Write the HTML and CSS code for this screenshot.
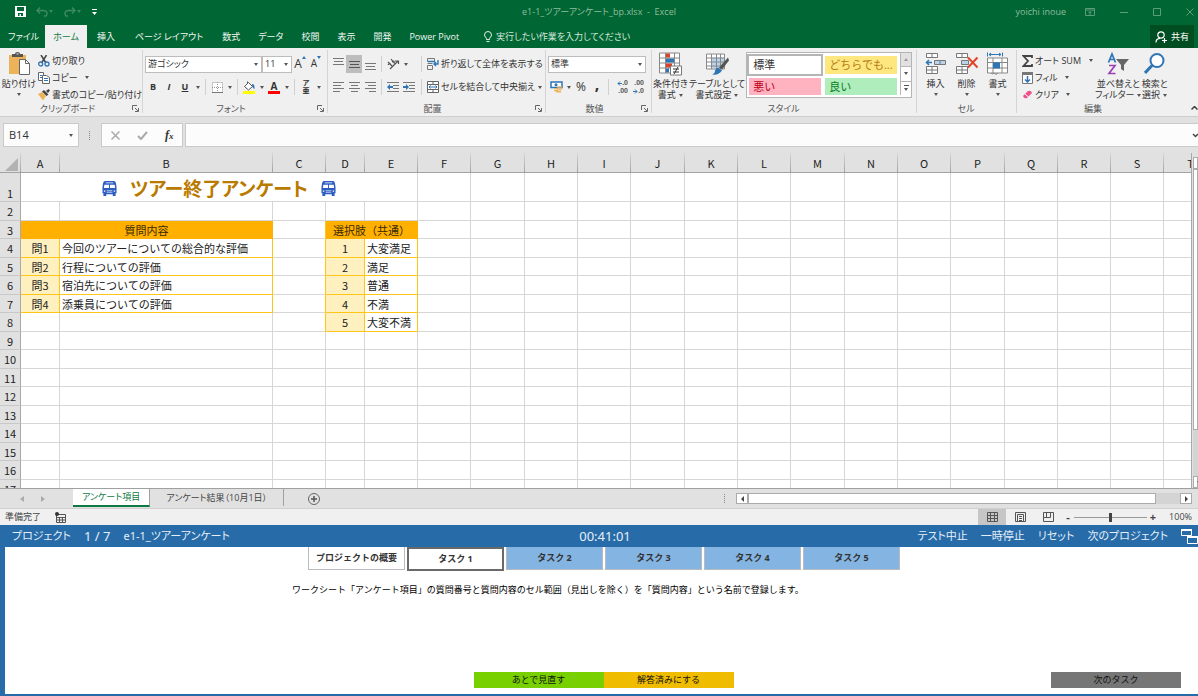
FILE: index.html
```html
<!DOCTYPE html>
<html lang="ja">
<head>
<meta charset="utf-8">
<title>e1-1_ツアーアンケート_bp.xlsx - Excel</title>
<link rel="stylesheet" href="styles.css">
</head>
<body>
<svg class="defs" aria-hidden="true">
  <symbol id="bus" viewBox="0 0 16 16"><path fill="#2c5cc0" d="M3 0h10q1.500 0 2 3l.5 4v6h-1v3h-3v-2h-7v2h-3v-3h-1V7L1 3Q1.500 0 3 0z"/><path fill="#fff" d="M4 1.500h8v1H4zM2.500 4h5v3.500H2zM8.500 4h5l.5 3.500H8.500zM5 10h6v1H5zM5 12h6v.5H5zM2 10h1.500v1.500H2zM12.500 10H14v1.500h-1.500z"/></symbol>
  <symbol id="launch" viewBox="0 0 7 7"><path fill="none" stroke="#666" d="M.5 5V.5H5M3 3l3 3M6.500 3v3.500H3"/></symbol>
</svg>

<header class="titlebar">
  <div class="quick">
    <button aria-label="保存"><svg width="11" height="11" viewBox="0 0 11 11"><path fill="#fff" d="M0 0h11v11H0zM2 1v4h7V1zM3 7v3h1.500V8H6v2h2V7z" fill-rule="evenodd"/></svg></button>
    <button aria-label="元に戻す" class="dim"><svg width="12" height="10" viewBox="0 0 12 10"><path fill="none" stroke="currentColor" stroke-width="1.500" d="M4 .5L1 3.500l3 3M1 3.500h6q4 0 4 3T8 9"/></svg><i class="arw"></i></button>
    <button aria-label="やり直し" class="dim"><svg width="12" height="10" viewBox="0 0 12 10"><path fill="none" stroke="currentColor" stroke-width="1.500" d="M8 .5l3 3-3 3M11 3.500H5Q1 3.500 1 6.500T4 9"/></svg><i class="arw"></i></button>
    <button aria-label="クイックアクセスのカスタマイズ"><svg width="5" height="6" viewBox="0 0 5 6"><path fill="#fff" d="M0 0h5v1H0zM0 3h5L2.500 6z"/></svg></button>
  </div>
  <h1 class="doc">e1-1_ツアーアンケート_bp.xlsx&nbsp; -&nbsp; Excel</h1>
  <div class="winctl">
    <span class="user">yoichi inoue</span>
    <button aria-label="リボンの表示オプション"><svg width="10" height="8" viewBox="0 0 10 8"><path fill="none" stroke="currentColor" d="M.5.5h9v7h-9zM.5 2h9M5 7V3.500M3.500 5L5 3.500 6.500 5"/></svg></button>
    <button aria-label="最小化"><svg width="8" height="8"><path stroke="currentColor" d="M0 4.500h8"/></svg></button>
    <button aria-label="最大化"><svg width="8" height="8"><path fill="none" stroke="currentColor" d="M.5.5h7v7h-7z"/></svg></button>
    <button aria-label="閉じる"><svg width="8" height="8"><path stroke="currentColor" d="M.5.5l7 7M7.500.5l-7 7"/></svg></button>
  </div>
</header>

<nav class="tabs">
  <button>ファイル</button>
  <button class="on">ホーム</button>
  <button>挿入</button>
  <button>ページ レイアウト</button>
  <button>数式</button>
  <button>データ</button>
  <button>校閲</button>
  <button>表示</button>
  <button>開発</button>
  <button>Power Pivot</button>
  <button class="tell"><svg width="8" height="12" viewBox="0 0 8 12"><path fill="none" stroke="#e5f0e8" d="M2.500 8.500Q2.500 7 1.500 6 .5 5 .5 4q0-3.500 3.500-3.500T7.500 4q0 1-1 2t-1 2.500zM2.500 10.500h3"/></svg>実行したい作業を入力してください</button>
  <button class="share"><svg width="12" height="12" viewBox="0 0 12 12"><circle cx="6" cy="4" r="3.200" fill="none" stroke="#fff" stroke-width="1.200"/><path fill="none" stroke="#fff" stroke-width="1.200" d="M1 11.500q0-4 4-4.200M9.500 7v5M7 9.500h5"/></svg>共有</button>
</nav>

<section class="ribbon">
  <div class="group g-clip">
    <div class="body">
      <button class="big"><svg width="22" height="24" viewBox="0 0 22 24"><path fill="#edb35a" d="M1 3h17v19H1z"/><path fill="#555" d="M4 5V2h3q0-2 2.500-2T12 2h3v3z"/><path fill="#eee" d="M8.500 1.500h2v1h-2z"/><path fill="#fff" stroke="#666" d="M11.500 7.500h6l4 4v11h-10z"/><path fill="none" stroke="#666" d="M17.500 7.500v4h4"/></svg><span>貼り付け</span><i class="arw"></i></button>
      <div class="list">
        <button><svg width="12" height="12" viewBox="0 0 12 12"><path stroke="#444" stroke-width="1.500" d="M3 0l5 8M8.500 0l-5 8"/><g fill="none" stroke="#2e75b6" stroke-width="1.300"><circle cx="2.700" cy="9" r="2"/><circle cx="9" cy="9" r="2"/></g></svg>切り取り</button>
        <button><svg width="12" height="12" viewBox="0 0 12 12"><path fill="#fff" stroke="#666" d="M.5.5h5v8h-5z"/><path fill="#fff" stroke="#666" d="M4.500 3.500h4l3 2v6h-7z"/><path stroke="#2e75b6" d="M2 3.500h2M2 5.500h2M6 6.500h4M6 8.500h4"/></svg>コピー <i class="arw"></i></button>
        <button><svg width="12" height="12" viewBox="0 0 12 12"><path fill="#edb35a" d="M0 5l4-2 4 4-3 4.500z"/><path fill="#444" d="M4 2.500l2-1.500 4.500 4.500L8.500 7zM8 2l2.500-2L12 1.500 10 4z"/></svg>書式のコピー/貼り付け</button>
      </div>
    </div>
    <div class="foot"><span>クリップボード</span><svg width="7" height="7"><use href="#launch"/></svg></div>
  </div>

  <div class="group g-font">
    <div class="body rows">
      <div class="row">
        <span class="sel fontname"><select aria-label="フォント"><option>游ゴシック</option></select></span>
        <span class="sel fontsize"><select aria-label="フォント サイズ"><option>11</option></select></span>
        <button class="tb aa" aria-label="フォント サイズの拡大">A<svg width="4" height="3"><path fill="#2e75b6" d="M0 3h4L2 0z"/></svg></button>
        <button class="tb aa small" aria-label="フォント サイズの縮小">A<svg width="4" height="3"><path fill="#2e75b6" d="M0 0h4L2 3z"/></svg></button>
      </div>
      <div class="row">
        <button class="tb"><b>B</b></button><button class="tb it"><b>I</b></button><button class="tb un"><b>U</b></button><i class="arw"></i>
        <i class="sep"></i>
        <button class="tb" aria-label="罫線"><svg width="11" height="11"><path fill="#fff" stroke="#999" stroke-dasharray="1 1" d="M.5.5h10v10H.5zM5.500 0v11M0 5.500h11"/><path stroke="#777" d="M0 10.500h11"/></svg></button><i class="arw"></i>
        <i class="sep"></i>
        <button class="tb" aria-label="塗りつぶしの色"><svg width="13" height="13" viewBox="0 0 13 13"><path fill="#fff" stroke="#555" d="M1.500 5.500l4-4 4 4-4 3.500zM4.500 3V.5"/><path fill="#2e75b6" d="M9 3q3 0 2.500 5Q9 7 9 3z"/><path fill="#ff0" d="M0 10h12v3H0z"/></svg></button><i class="arw"></i>
        <button class="tb fc" aria-label="フォントの色"><b>A</b></button><i class="arw"></i>
        <i class="sep"></i>
        <button class="tb ruby" aria-label="ふりがな"><span>ア</span><span>亜</span></button><i class="arw"></i>
      </div>
    </div>
    <div class="foot"><span>フォント</span><svg width="7" height="7"><use href="#launch"/></svg></div>
  </div>

  <div class="group g-align">
    <div class="body rows">
      <div class="row">
        <button class="tb" aria-label="上揃え"><svg width="11" height="12"><path stroke="#777" d="M0 .5h11M1 3.500h9M0 6.500h11"/></svg></button>
        <button class="tb on" aria-label="上下中央揃え"><svg width="11" height="12"><path stroke="#555" d="M0 3.500h11M1 6.500h9M0 9.500h11"/></svg></button>
        <button class="tb" aria-label="下揃え"><svg width="11" height="12"><path stroke="#777" d="M0 5.500h11M1 8.500h9M0 11.500h11"/></svg></button>
        <i class="sep"></i>
        <span class="pair"><button class="tb" aria-label="方向"><svg width="13" height="12" viewBox="0 0 13 12"><path fill="none" stroke="#555" stroke-width="1.200" d="M3 11l8-8M8 3h3.500v3M1 4l4 4M1 7q2-3 2.500-.5M4 1l4 5M5 4q3-2 2 1"/></svg></button><i class="arw"></i></span>
        <i class="sep"></i>
        <button class="lbl"><svg width="12" height="12" viewBox="0 0 12 12"><path fill="none" stroke="#777" d="M.5.5h7v3h-7zM.5 7.500h5v4h-5zM.5 5.500h5"/><path fill="none" stroke="#2e75b6" stroke-width="1.400" d="M1 3.500h7M11 2v4H7M9 4L7 6l2 2"/></svg>折り返して全体を表示する</button>
      </div>
      <div class="row">
        <button class="tb" aria-label="左揃え"><svg width="11" height="10"><path stroke="#777" d="M0 .5h11M0 3.500h8M0 6.500h11M0 9.500h7"/></svg></button>
        <button class="tb" aria-label="中央揃え"><svg width="11" height="10"><path stroke="#777" d="M0 .5h11M2 3.500h7M0 6.500h11M2 9.500h7"/></svg></button>
        <button class="tb" aria-label="右揃え"><svg width="11" height="10"><path stroke="#777" d="M0 .5h11M3 3.500h8M0 6.500h11M4 9.500h7"/></svg></button>
        <i class="sep"></i>
        <span class="pair"><button class="tb" aria-label="インデントを減らす"><svg width="12" height="10"><path stroke="#777" d="M0 .5h12M6 3.500h6M6 6.500h6M0 9.500h12"/><path fill="#2e75b6" d="M0 5l3-3v2h3v2H3v2z"/></svg></button><button class="tb" aria-label="インデントを増やす"><svg width="12" height="10"><path stroke="#777" d="M0 .5h12M6 3.500h6M6 6.500h6M0 9.500h12"/><path fill="#2e75b6" d="M6 5L3 2v2H0v2h3v2z"/></svg></button></span>
        <i class="sep"></i>
        <button class="lbl"><svg width="12" height="12" viewBox="0 0 12 12"><path fill="#fff" stroke="#666" d="M.5.5h11v11H.5zM.5 3.500h11M.5 8.500h11M6 .5v3M6 8.500v3"/><path stroke="#2e75b6" d="M2 6h8M3.500 4.500L2 6l1.500 1.500M8.500 4.500L10 6 8.500 7.500" fill="none"/></svg>セルを結合して中央揃え</button><i class="arw end"></i>
      </div>
    </div>
    <div class="foot"><span>配置</span><svg width="7" height="7"><use href="#launch"/></svg></div>
  </div>

  <div class="group g-num">
    <div class="body rows">
      <div class="row"><span class="sel numfmt"><select aria-label="表示形式"><option>標準</option></select></span></div>
      <div class="row">
        <button class="tb" aria-label="通貨表示形式"><svg width="13" height="12" viewBox="0 0 13 12"><path fill="#fff" stroke="#2e75b6" stroke-width="1.500" d="M1 1h11v5.500H1z"/><circle cx="6" cy="3.700" r="1.500" fill="#2e75b6"/><path fill="#edb35a" d="M4 7h4v1.200H4zM4 9h4v1.200H4zM7 5.500h5v1.200H7zM7 7.500h5v1.200H7zM6 9.500h5v2H6z"/></svg></button><i class="arw"></i>
        <button class="tb pct">%</button><button class="tb pct comma"><b>,</b></button>
        <i class="sep"></i>
        <button class="tb dec" aria-label="小数点以下の表示桁数を増やす"><span><svg width="5" height="5"><path fill="none" stroke="#2e75b6" d="M5 2.500H1M3 .5l-2 2 2 2"/></svg>.0</span><span>.00</span></button>
        <button class="tb dec" aria-label="小数点以下の表示桁数を減らす"><span>.00</span><span><svg width="5" height="5"><path fill="none" stroke="#2e75b6" d="M0 2.500h4M2 .5l2 2-2 2"/></svg>.0</span></button>
      </div>
    </div>
    <div class="foot"><span>数値</span><svg width="7" height="7"><use href="#launch"/></svg></div>
  </div>

  <div class="group g-style">
    <div class="body">
      <button class="big"><svg width="23" height="23" viewBox="0 0 23 23"><path fill="#fff" stroke="#888" d="M.5.5h20v20H.5zM.5 5.500h20M.5 10.500h20M.5 15.500h20M6.500.5v20M15.500.5v20"/><path fill="#d8432a" d="M7 1h4v4H7zM7 11h6v4H7z"/><path fill="#2e75b6" d="M7 6h8v4H7zM7 16h3v4H7z"/><path fill="#fff" stroke="#777" d="M11.500 13.500h11v9h-11z"/><path stroke="#333" d="M14 16.500h6M14 19.500h6M19 14.500l-4 7"/></svg><span>条件付き<br>書式 <i class="arw"></i></span></button>
      <button class="big"><svg width="23" height="23" viewBox="0 0 23 23"><path fill="#fff" d="M1 1h18v15H1z"/><path fill="#b8d3ea" d="M6 5h13v11H6z"/><path fill="none" stroke="#888" d="M.5 1.500h18v15H.5zM.5 5.500h18M.5 9.500h18M.5 13.500h18M5.500 1.500v15M10.500 1.500v15M14.500 1.500v15"/><path fill="#555" d="M22 5l1 3-7 9-3-2z"/><path fill="#2e75b6" d="M12 15l4 3q-3 5-10 4 3-1 3-4 1-2 3-3z"/></svg><span>テーブルとして<br>書式設定 <i class="arw"></i></span></button>
      <div class="gallery">
        <button class="st normal">標準</button><button class="st neutral">どちらでも...</button>
        <button class="st bad">悪い</button><button class="st good">良い</button>
        <div class="gscroll"><button class="off" aria-label="上へ"><i class="arw up"></i></button><button aria-label="下へ"><i class="arw"></i></button><button class="more" aria-label="その他"><i class="arw"></i></button></div>
      </div>
    </div>
    <div class="foot"><span>スタイル</span></div>
  </div>

  <div class="group g-cell">
    <div class="body">
      <button class="big"><svg width="21" height="22" viewBox="0 0 21 22"><path fill="#fff" stroke="#777" d="M1.500.5h11v4h-11zM7 .5v4M1.500 13.500h11v7h-11zM1.500 17h11M7 13.500v7"/><path fill="#b8d3ea" stroke="#777" d="M9.500 7.500h11v4h-11zM15 7.500v4"/><path fill="none" stroke="#2e75b6" stroke-width="1.500" d="M1 9.500h6M4 7L1.500 9.500 4 12"/></svg><span>挿入</span><i class="arw"></i></button>
      <button class="big"><svg width="22" height="22" viewBox="0 0 22 22"><path fill="#fff" stroke="#777" d="M.5.5h11v4H.5zM6 .5v4M.5 13.500h11v7H.5zM.5 17h11M6 13.500v7"/><path fill="#b8d3ea" stroke="#777" d="M5.500 7.500h7v4h-7z"/><path stroke="#e0442a" stroke-width="2" d="M12 4.500l9.500 10M21.500 4.500l-9.500 10"/></svg><span>削除</span><i class="arw"></i></button>
      <button class="big"><svg width="21" height="23" viewBox="0 0 21 23"><path fill="#fff" stroke="#888" d="M.5 5.500h20v15H.5zM.5 10h20M.5 15.500h20M6 5.500v15M15 5.500v15"/><path fill="#2e75b6" d="M6 10h7v6H6z"/><path fill="none" stroke="#2e75b6" d="M.5 0v4M15.500 0v4M2 2h12M4 .5L2 2l2 1.500M12 .5L14 2l-2 1.500"/><path fill="none" stroke="#888" d="M4 20.500q1 2 3 0 2 3 4 0"/></svg><span>書式</span><i class="arw"></i></button>
    </div>
    <div class="foot"><span>セル</span></div>
  </div>

  <div class="group g-edit">
    <div class="body">
      <div class="list">
        <button><svg width="11" height="12" viewBox="0 0 11 12"><path fill="none" stroke="#444" stroke-width="1.800" d="M10 3V1H1.500L6 6l-4.500 5H10V9"/></svg>オート SUM <i class="arw far"></i></button>
        <button><svg width="11" height="12" viewBox="0 0 11 12"><path fill="#fff" stroke="#777" d="M.5.5h10v11H.5z"/><path fill="#777" d="M0 0h11v3H0z"/><path fill="none" stroke="#2e75b6" stroke-width="1.500" d="M5.500 4v6M3 7.500L5.500 10 8 7.500"/></svg>フィル <i class="arw"></i></button>
        <button><svg width="11" height="12" viewBox="0 0 11 12"><path fill="#f0508a" d="M1 7l5-5q3-1 4 2L5 9q-3 1-4-2z"/><path stroke="#fff" d="M3 5l3.500 3"/></svg>クリア <i class="arw"></i></button>
      </div>
      <button class="big"><svg width="23" height="22" viewBox="0 0 23 22"><g fill="none" stroke-width="1.700"><path stroke="#2e75b6" d="M1.500 9.500L5 1l3.500 8.500M2.500 6.500h5"/><path stroke="#9b3fb5" d="M2 12.500h6l-6 8h6.500"/></g><path fill="#666" d="M9 6h13l-5 6v6l-3-2v-4z"/></svg><span>並べ替えと<br>フィルター <i class="arw"></i></span></button>
      <button class="big"><svg width="21" height="22" viewBox="0 0 21 22"><circle cx="13" cy="7.500" r="6.500" fill="#fff" stroke="#2e75b6" stroke-width="2"/><path stroke="#2e75b6" stroke-width="3" d="M8 12.500L1 20"/></svg><span>検索と<br>選択 <i class="arw"></i></span></button>
    </div>
    <div class="foot"><span>編集</span></div>
  </div>
  <button class="collapse" aria-label="リボンを折りたたむ"><svg width="7" height="4"><path fill="none" stroke="#444" stroke-width="1.500" d="M.5 3.500l3-3 3 3"/></svg></button>
</section>

<section class="formula">
  <div class="namebox"><input aria-label="名前ボックス" value="B14"><i class="arw"></i></div>
  <i class="dots"></i>
  <div class="fx">
    <button aria-label="キャンセル"><svg width="9" height="9"><path stroke="#aaa" stroke-width="1.500" d="M.5.5l8 8M8.500.5l-8 8"/></svg></button>
    <button aria-label="入力"><svg width="11" height="9"><path fill="none" stroke="#aaa" stroke-width="2" d="M1 5l3 3 6-7"/></svg></button>
    <button class="fn" aria-label="関数の挿入"><i>f<small>x</small></i></button>
  </div>
  <div class="bar"><input aria-label="数式バー"><svg width="6" height="5"><path fill="none" stroke="#444" stroke-width="1.500" d="M1 1l2.500 2.500L6 1"/></svg></div>
</section>

<main class="sheet">
  <div class="grid">
    <table>
      <colgroup><col class="c-head"><col class="c-a"><col class="c-b"><col class="c-n"><col class="c-d"><col class="c-n"><col class="c-n"><col class="c-w"><col class="c-n"><col class="c-n"><col class="c-w"><col class="c-n"><col class="c-n"><col class="c-w"><col class="c-n"><col class="c-n"><col class="c-w"><col class="c-n"><col class="c-n"><col class="c-n"><col class="c-w"></colgroup>
      <thead><tr><th class="corner"><svg width="13" height="13"><path fill="#b2b2b2" d="M13 0v13H0z"/></svg></th><th>A</th><th>B</th><th>C</th><th>D</th><th>E</th><th>F</th><th>G</th><th>H</th><th>I</th><th>J</th><th>K</th><th>L</th><th>M</th><th>N</th><th>O</th><th>P</th><th>Q</th><th>R</th><th>S</th><th>T</th></tr></thead>
      <tbody>
      <tr class="r1"><th>1</th><td colspan="5"><div class="heading"><svg width="15" height="15"><use href="#bus"/></svg><span>ツアー終了アンケート</span><svg width="15" height="15"><use href="#bus"/></svg></div></td><td><td><td><td><td><td><td><td><td><td><td><td><td><td><td></tr>
      <tr><th>2</th><td><td><td><td><td><td><td><td><td><td><td><td><td><td><td><td><td><td><td><td></tr>
      <tr><th>3</th><td colspan="2" class="hd">質問内容</td><td class="pre"><td colspan="2" class="hd">選択肢（共通）</td><td><td><td><td><td><td><td><td><td><td><td><td><td><td><td></tr>
      <tr><th>4</th><td class="k">問1</td><td class="v">今回のツアーについての総合的な評価</td><td class="pre"><td class="k">1</td><td class="v">大変満足</td><td><td><td><td><td><td><td><td><td><td><td><td><td><td><td></tr>
      <tr><th>5</th><td class="k">問2</td><td class="v">行程についての評価</td><td class="pre"><td class="k">2</td><td class="v">満足</td><td><td><td><td><td><td><td><td><td><td><td><td><td><td><td></tr>
      <tr><th>6</th><td class="k">問3</td><td class="v">宿泊先についての評価</td><td class="pre"><td class="k">3</td><td class="v">普通</td><td><td><td><td><td><td><td><td><td><td><td><td><td><td><td></tr>
      <tr><th>7</th><td class="k">問4</td><td class="v">添乗員についての評価</td><td class="pre"><td class="k">4</td><td class="v">不満</td><td><td><td><td><td><td><td><td><td><td><td><td><td><td><td></tr>
      <tr><th>8</th><td><td><td class="pre"><td class="k">5</td><td class="v">大変不満</td><td><td><td><td><td><td><td><td><td><td><td><td><td><td><td></tr>
      <tr><th>9</th><td><td><td><td><td><td><td><td><td><td><td><td><td><td><td><td><td><td><td><td></tr>
      <tr><th>10</th><td><td><td><td><td><td><td><td><td><td><td><td><td><td><td><td><td><td><td><td></tr>
      <tr><th>11</th><td><td><td><td><td><td><td><td><td><td><td><td><td><td><td><td><td><td><td><td></tr>
      <tr><th>12</th><td><td><td><td><td><td><td><td><td><td><td><td><td><td><td><td><td><td><td><td></tr>
      <tr><th>13</th><td><td><td><td><td><td><td><td><td><td><td><td><td><td><td><td><td><td><td><td></tr>
      <tr><th>14</th><td><td><td><td><td><td><td><td><td><td><td><td><td><td><td><td><td><td><td><td></tr>
      <tr><th>15</th><td><td><td><td><td><td><td><td><td><td><td><td><td><td><td><td><td><td><td><td></tr>
      <tr><th>16</th><td><td><td><td><td><td><td><td><td><td><td><td><td><td><td><td><td><td><td><td></tr>
      <tr><th>17</th><td><td><td><td><td><td><td><td><td><td><td><td><td><td><td><td><td><td><td><td></tr>
      </tbody>
    </table>
  </div>
  <div class="vscroll"><button aria-label="上へスクロール"><i class="arw up"></i></button><div class="vthumb"></div><div class="vtrack"></div><button aria-label="下へスクロール"><i class="arw"></i></button></div>
</main>

<section class="sheettabs">
  <div class="nav"><button aria-label="前のシート"><svg width="4" height="6"><path fill="#aaa" d="M4 0v6L0 3z"/></svg></button><button aria-label="次のシート"><svg width="4" height="6"><path fill="#aaa" d="M0 0v6l4-3z"/></svg></button></div>
  <button class="stab on">アンケート項目</button>
  <button class="stab wide">アンケート結果（10月1日）</button>
  <button class="add" aria-label="新しいシート"><svg width="12" height="12"><circle cx="6" cy="6" r="5.500" fill="none" stroke="#666"/><path stroke="#555" stroke-width="1.500" d="M6 3v6M3 6h6"/></svg></button>
  <div class="hwrap">
    <i class="dots"></i>
    <button class="hb" aria-label="左へスクロール"><svg width="3" height="6"><path fill="#444" d="M3 0v6L0 3z"/></svg></button>
    <div class="hthumb"></div><div class="htrack"></div>
    <button class="hb" aria-label="右へスクロール"><svg width="3" height="6"><path fill="#444" d="M0 0v6l3-3z"/></svg></button>
  </div>
</section>

<footer class="status">
  <span>準備完了</span>
  <svg width="11" height="11"><path fill="none" stroke="#555" d="M1.500 2.500h9v8h-9zM1.500 5.500h9M4.500 5v5M7.500 5v5M2 8h8"/><circle cx="2" cy="2" r="2" fill="#333"/></svg>
  <div class="views">
    <button class="on" aria-label="標準"><svg width="11" height="10"><path fill="none" stroke="#555" d="M.5.500h10v9H.5zM.5 3.500h10M.5 6.500h10M3.500.500v9M7.500.500v9"/></svg></button>
    <button aria-label="ページ レイアウト"><svg width="11" height="10"><path fill="none" stroke="#555" d="M.5.500h10v9H.5zM2.500 2.500h6v7M2.500 2.500v7M4 4.500h3M4 6.500h3M4 8.500h3"/></svg></button>
    <button aria-label="改ページ プレビュー"><svg width="11" height="10"><path fill="none" stroke="#555" d="M.5.500h10v9H.5zM3.500.500v5M7.500.500v5M.5 5.500h7"/></svg></button>
  </div>
  <button class="zb">-</button><input type="range" aria-label="ズーム" min="0" max="100" value="50"><button class="zb">+</button>
  <span class="pc">100%</span>
</footer>

<section class="exam">
  <header class="exbar">
    <div class="proj"><span>プロジェクト</span><span class="num">1 / 7</span><span>e1-1_ツアーアンケート</span></div>
    <time class="num">00:41:01</time>
    <div class="acts"><button>テスト中止</button><button>一時停止</button><button>リセット</button><button>次のプロジェクト</button><button class="lay" aria-label="ウィンドウの配置"><svg width="17" height="16"><path fill="none" stroke="#fff" d="M.5 1.500h10v6H.5z"/><path stroke="#fff" stroke-width="2" d="M0 2h11"/><path fill="#276ca9" stroke="#fff" d="M6.500 8.500h10v7h-10z"/><path stroke="#fff" stroke-width="2" d="M6 9h11"/></svg></button></div>
  </header>
  <div class="expane">
    <nav class="tasks"><button class="over">プロジェクトの概要</button><button class="cur">タスク 1</button><button>タスク 2</button><button>タスク 3</button><button>タスク 4</button><button>タスク 5</button></nav>
    <p>ワークシート「アンケート項目」の質問番号と質問内容のセル範囲（見出しを除く）を「質問内容」という名前で登録します。</p>
    <div class="answers"><button class="later">あとで見直す</button><button class="done">解答済みにする</button><button class="next">次のタスク</button></div>
  </div>
</section>
</body>
</html>
```
FILE: styles.css
```css
* { box-sizing: border-box; }
body {
  margin: 0;
  height: 100vh;
  display: flex;
  flex-direction: column;
  overflow: hidden;
  background: #e1e1e1;
  color: #333;
  font: 9px/12px "Open Sans", "Noto Sans CJK JP", sans-serif;
  font-feature-settings: "palt";
}
button, input, select {
  font: inherit;
  font-feature-settings: inherit;
  color: inherit;
  background: none;
  border: 0;
  padding: 0;
  margin: 0;
  border-radius: 0;
  outline: 0;
  white-space: nowrap;
}
svg { flex: none; display: block; }
.defs { position: absolute; width: 0; height: 0; }

/* small drop-down triangle */
.arw { display: inline-flex; flex: none; width: 9px; justify-content: center; align-items: center; vertical-align: middle; }
.arw::before { content: ""; border: 2px solid transparent; border-top: 3px solid #555; border-bottom: 0; }
.arw.up::before { border-top: 0; border-bottom: 3px solid #999; }

/* title bar */
.titlebar { flex: none; height: 25px; padding-bottom: 2px; background: #006633; color: #8fbd9f; display: grid; grid-template-columns: 1fr auto 1fr; align-items: center; }
.quick { display: flex; align-items: center; gap: 10px; padding-left: 15px; }
.quick button { display: flex; align-items: center; }
.quick .arw { width: 6px; }
.dim { color: #3d8a5f; }
.dim .arw::before { border-top-color: #3d8a5f; }
.doc { margin: 0; font-size: 9px; font-weight: 400; white-space: pre; }
.winctl { display: flex; justify-content: flex-end; align-items: center; gap: 25px; padding-right: 4px; color: #5c9c79; }
.winctl button { display: flex; }
.user { color: #8fbd9f; margin-right: -6px; }

/* ribbon tabs */
.tabs { flex: none; height: 23px; background: #006633; color: #f2f8f4; display: flex; align-items: stretch; }
.tabs button { padding: 0 9px; display: flex; align-items: center; }
.tabs button:nth-child(-n+4) { padding: 0 10px; }
.tabs button:first-child { padding: 0 6px 0 8px; }
.tabs .on.on { background: #f0f0f0; color: #0e7a43; padding: 0 8px; }
.tabs .tell { gap: 4px; padding-left: 16px; color: #d5e8dc; }
.tabs .share { margin-left: auto; margin-right: 4px; padding: 0 5px; gap: 4px; background: #004d21; color: #fff; }

/* ribbon */
.ribbon { flex: none; height: 69px; background: #f0f0f0; display: flex; border-bottom: 1px solid #cfcfcf; position: relative; }
.group { flex: none; display: flex; flex-direction: column; padding: 2px 0 1px; }
.group + .group::before { content: ""; position: absolute; width: 1px; height: 63px; background: #d4d4d4; }
.body { flex: 1; display: flex; align-items: flex-start; padding-top: 2px; min-height: 0; }
.rows { flex-direction: column; gap: 5px; padding-top: 5px; }
.row { display: flex; align-items: center; height: 18px; }
.foot { display: flex; align-items: center; height: 13px; padding: 0 3px; color: #555; }
.foot span { flex: 1; text-align: center; }
.g-clip { width: 142px; }
.g-font { width: 185px; }
.g-align { width: 218px; }
.g-num { width: 106px; }
.g-style { width: 265px; }
.g-cell { width: 100px; }
.g-edit { width: 154px; }
.g-font .body, .g-num .body, .g-align .body { padding-left: 3px; }
.big { display: flex; flex-direction: column; align-items: center; gap: 2px; line-height: 11px; text-align: center; }
.big svg { height: 24px; }
.big > span { min-height: 11px; }
.big > .arw { height: 6px; }
.big span .arw { width: 5px; }
.g-clip .big { width: 39px; }
.list { display: flex; flex-direction: column; }
.list button { display: flex; align-items: center; gap: 2px; height: 17px; line-height: 14px; }
.list .arw { margin-left: 3px; }
.sel { display: inline-flex; position: relative; height: 17px; background: #fff; border: 1px solid #bdbdbd; align-items: center; }
.sel select { appearance: none; width: 100%; padding-left: 2px; color: #333; }
.sel::after { content: ""; position: absolute; right: 3px; top: 6px; border: 2px solid transparent; border-top: 3px solid #555; border-bottom: 0; pointer-events: none; }
.fontname { width: 117px; }
.fontsize { width: 30px; }
.numfmt { width: 98px; }
.tb { width: 16px; height: 16px; flex: none; display: flex; align-items: center; justify-content: center; }
.tb.on { background: #bdbdbd; height: 18px; }
.it { font-style: italic; }
.un { text-decoration: underline; }
.aa { font-size: 12px; align-items: flex-start; line-height: 15px; }
.aa.small { font-size: 10px; }
.fc b { border-bottom: 3px solid #f00; width: 12px; font-size: 10px; line-height: 10px; }
.ruby { flex-direction: column; font-size: 7px; line-height: 8px; font-weight: 700; }
.sep { width: 1px; height: 16px; background: #d0d0d0; margin: 0 3px; flex: none; }
.pair { display: flex; align-items: center; width: 33px; }
.lbl { display: flex; align-items: center; gap: 2px; padding-left: 2px; }
.end { margin-left: auto; margin-right: 4px; }
.pct { font-size: 12px; }
.comma { font-size: 16px; align-items: flex-start; line-height: 10px; }
.dec { flex-direction: column; align-items: flex-end; font: 700 7px/8px "Liberation Sans", sans-serif; color: #555; }
.dec span { display: flex; align-items: center; }
.g-style .body { gap: 1px; padding-left: 2px; }
.gallery { display: grid; grid-template-columns: 74px 74px 11px; grid-template-rows: 20px 19px; gap: 2px; width: 166px; height: 46px; margin-left: auto; margin-right: 4px; padding: 1px 0 0 1px; border: 1px solid #b5b5b5; background: #fff; }
.st { text-align: left; padding-left: 4px; font-size: 11px; font-feature-settings: normal; margin: 2px 1px 0; }
.normal { background: #fff; outline: 2px solid #b5b5b5; }
.neutral { background: #ffe77f; color: #b57a10; }
.bad { background: #ffb3c0; color: #c00020; }
.good { background: #b0edbc; color: #0a7a1c; }
.gscroll { grid-column: 3; grid-row: 1 / 3; display: flex; flex-direction: column; margin-top: -1px; border-left: 1px solid #b5b5b5; }
.gscroll button { flex: 1; border-bottom: 1px solid #b5b5b5; display: flex; align-items: center; justify-content: center; }
.gscroll button:last-child { border-bottom: 0; }
.gscroll .off { background: #e1e1e1; }
.more .arw { border-top: 1px solid #555; width: 5px; padding-top: 2px; }
.g-cell .body { justify-content: space-between; padding: 2px 8px 0 9px; }
.g-edit .body { padding-left: 6px; justify-content: space-between; padding-right: 6px; }
.collapse { margin-left: auto; align-self: flex-end; padding: 0 0 6px; }

/* formula bar */
.formula { flex: none; display: flex; align-items: center; height: 36px; padding: 6px 0 6px 3px; }
.namebox, .fx, .bar { height: 24px; display: flex; align-items: center; background: #fcfcfc; border: 1px solid #cacaca; }
.namebox { width: 76px; padding-left: 5px; }
.namebox input { flex: 1; width: 10px; font-size: 11px; }
.namebox .arw { margin-right: 3px; }
.dots { width: 2px; height: 9px; margin: 0 10px; border-left: 1px dotted #888; }
.fx { width: 82px; justify-content: space-around; margin-right: 2px; }
.fx button { display: flex; }
.fx .fn { font: italic 700 12px/14px "Liberation Serif", serif; }
.fn small { font-size: 9px; }
.bar { flex: 1; border-right: 0; }
.bar input { flex: 1; }

/* worksheet */
.sheet { flex: 1; min-height: 0; display: flex; }
.grid { flex: 1; min-width: 0; overflow: hidden; border-right: 1px solid #a8a8a8; }
table { table-layout: fixed; width: 1218px; border-collapse: separate; border-spacing: 0; background: #fff; font: 11px/16px "Noto Sans CJK JP", sans-serif; font-feature-settings: normal; color: #222; }
.c-head { width: 21px; }
.c-a { width: 39px; }
.c-b { width: 213px; }
.c-n { width: 53px; }
.c-w { width: 54px; }
.c-d { width: 39px; }
th, td { padding: 0; overflow: hidden; white-space: nowrap; border-right: 1px solid #d6d6d6; border-bottom: 1px solid #d6d6d6; }
tr { height: 19px; }
tbody tr:nth-child(odd) { height: 18px; }
tbody .r1 { height: 30px; }
td { height: inherit; }
tbody th, td { line-height: 16px; }
th { font-weight: 400; background: #e1e1e1; }
thead tr { height: 20px; }
thead th { border-image: linear-gradient(#d8d8d8, #a0a0a0) 1; border-top: 0; border-left: 0; }
.corner svg { margin-left: 5px; margin-top: 4px; }
tbody th { border-right-color: #a8a8a8; border-bottom-color: #c8c8c8; }
.r1 th { vertical-align: bottom; }
.heading { display: flex; justify-content: center; align-items: center; gap: 13px; height: 28px; padding-top: 2px; font-size: 19px; font-weight: 700; color: #b97a00; font-feature-settings: "palt"; }
.hd { background: #ffb000; border-color: #ffb000; text-align: center; color: #3a2a00; }
.k { background: #fff0c0; text-align: center; border-color: #ffc61a; }
.v { padding-left: 2px; border-color: #ffc61a; }
.pre { border-right-color: #ffc61a; }
.vscroll { flex: none; width: 6px; padding: 4px 0 0 1px; display: flex; flex-direction: column; overflow: hidden; }
.vscroll button { flex: none; height: 12px; border: 1px solid #ababab; background: #fff; display: flex; align-items: center; }
.vthumb { flex: 1; background: #fff; border: 1px solid #ababab; }
.vtrack { height: 46px; background: #d4d4d4; }

/* sheet tabs */
.sheettabs { flex: none; height: 20px; display: flex; border-top: 1px solid #a0a0a0; }
.nav { width: 73px; display: flex; align-items: center; gap: 17px; padding-left: 20px; }
.stab { padding: 0 9px; min-width: 76px; color: #444; border-right: 1px solid #a0a0a0; margin-bottom: 2px; }
.stab.on { background: #fff; color: #0e7a43; border-bottom: 2px solid #0e7a43; margin-bottom: 0; height: 18px; }
.stab.wide { min-width: 134px; }
.add { margin-left: 24px; }
.hwrap { margin-left: auto; width: 484px; display: flex; align-items: center; padding-right: 6px; }
.hb { width: 12px; height: 11px; border: 1px solid #ababab; background: #fff; display: flex; align-items: center; justify-content: center; }
.hthumb { flex: 1; height: 11px; background: #fff; border: 1px solid #ababab; }
.htrack { width: 24px; height: 11px; background: #d4d4d4; }

/* status bar */
.status { flex: none; height: 17px; display: flex; align-items: center; padding: 0 6px 0 5px; background: #f0f0f0; border-top: 1px solid #d0d0d0; color: #444; }
.status > svg { margin-left: 14px; }
.views { margin-left: auto; display: flex; height: 100%; }
.views button { width: 28px; display: flex; align-items: center; justify-content: center; }
.views .on { background: #c6c6c6; }
.zb { width: 12px; font-size: 11px; font-weight: 700; }
.status input { appearance: none; width: 73px; height: 9px; background: linear-gradient(#999, #999) center / 100% 1px no-repeat; }
.status input::-webkit-slider-thumb { appearance: none; width: 3px; height: 9px; background: #444; }
.pc { width: 33px; text-align: right; }

/* exam panel */
.exam { flex: none; border-left: 5px solid #276ca9; border-bottom: 2px solid #276ca9; background: #fff; }
.exbar { height: 22px; margin-left: -5px; padding: 0 0 0 12px; display: grid; grid-template-columns: 1fr auto 1fr; align-items: center; background: #276ca9; color: #e6eff7; font: 11px/20px "Noto Sans", "Noto Sans CJK JP", sans-serif; font-feature-settings: "palt"; }
.num { font-size: 13px; }
.proj, .acts { display: flex; gap: 13px; white-space: nowrap; align-items: center; }
.acts { justify-content: flex-end; }
.expane { height: 147px; display: flex; flex-direction: column; font: 9px/16px "Noto Sans", "Noto Sans CJK JP", sans-serif; font-feature-settings: normal; color: #111; }
.tasks { display: flex; justify-content: center; gap: 2px; height: 24px; padding-left: 5px; }
.tasks button { width: 97px; height: 23px; border: 1px solid #b8bcc0; border-top: 0; background: #83b4e2; font-weight: 700; color: #333; }
.tasks .over { background: #fff; }
.tasks .cur { background: #fff; border: 2px solid #6a6a6a; height: 24px; }
.expane p { margin: 11px auto 0 287px; color: #000; }
.answers { margin-top: auto; margin-bottom: 6px; display: grid; grid-template-columns: 1fr 130px 130px 1fr; padding-right: 17px; margin-left: 21px; }
.answers button { height: 16px; }
.later { grid-column: 2; background: #78d000; }
.answers .done { background: #f0bc00; }
.answers .later { background: #78d000; }
.answers .next { width: 130px; justify-self: end; background: #767676; }
```
